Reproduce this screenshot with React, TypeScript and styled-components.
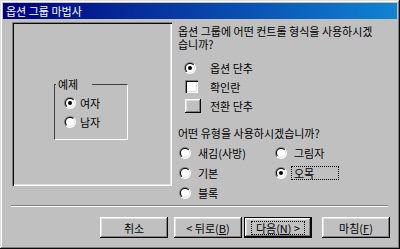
import React, { useId } from 'react';
import styled, { createGlobalStyle, css } from 'styled-components';

const Global = createGlobalStyle`
  html, body { margin: 0; padding: 0; background: #c0c0c0; }
  body {
    font-family: "Noto Sans CJK KR", "Noto Sans", sans-serif;
    font-size: 11px;
    color: #000;
  }
  * { box-sizing: border-box; }
`;

const Window = styled.div`
  width: 400px;
  height: 249px;
  background: #c0c0c0;
  padding: 3px;
  display: flex;
  flex-direction: column;
  box-shadow: inset -1px -1px #0a0a0a, inset 1px 1px #dfdfdf,
    inset -2px -2px #808080, inset 2px 2px #ffffff;
`;

const TitleBar = styled.div`
  height: 16px;
  padding-left: 3px;
  display: flex;
  align-items: center;
  background: linear-gradient(90deg, #000080 0%, #1084d0 100%);
  color: #fff;
  font-size: 11px;
  line-height: 16px;
  white-space: nowrap;
`;

const Body = styled.div`
  flex: 1;
  display: flex;
  flex-direction: column;
  padding: 3px 0 0 9px;
`;

const Main = styled.div`
  display: flex;
  gap: 6px;
`;

const Preview = styled.div`
  width: 160px;
  height: 164px;
  flex: none;
  padding: 56px 0 0 42px;
  box-shadow: inset 1px 1px #808080, inset 2px 2px #0a0a0a,
    inset -1px -1px #ffffff, inset -2px -2px #dfdfdf;
`;

const GroupBox = styled.fieldset`
  width: 74px;
  height: 62px;
  margin: 0;
  padding: 0;
  min-width: 0;
  border: 1px solid;
  border-color: #404040 #ffffff #ffffff #404040;
`;

const Legend = styled.legend`
  margin-left: 1px;
  padding: 0 14px 0 2px;
  font-size: 11px;
  line-height: 12px;
`;

const GroupList = styled.div`
  display: flex;
  flex-direction: column;
  padding: 3px 0 0 9px;
`;

const GroupRow = styled.div`
  height: 19px;
  display: flex;
  align-items: center;
  gap: 4px;
  line-height: 12px;
`;

const Side = styled.div`
  flex: 1;
  display: flex;
  flex-direction: column;
  padding-top: 3px;
  white-space: nowrap;
`;

const Prompt = styled.p<{ $gap?: number }>`
  margin: ${(p) => p.$gap ?? 0}px 0 0 0;
  line-height: 13px;
`;

const OptionList = styled.div`
  display: flex;
  flex-direction: column;
  margin-top: 7px;
  padding-left: 6px;
`;

const OptionRow = styled.div`
  height: 19px;
  display: flex;
  align-items: center;
  line-height: 12px;
`;

const IconCell = styled.span<{ $inset?: number }>`
  width: 26px;
  flex: none;
  display: flex;
  align-items: center;
  padding-left: ${(p) => p.$inset ?? 0}px;
`;

const CheckBox = styled.span`
  display: block;
  width: 13px;
  height: 13px;
  background: #fff;
  box-shadow: inset 1px 1px #808080, inset 2px 2px #0a0a0a,
    inset -1px -1px #ffffff, inset -2px -2px #dfdfdf;
`;

const ToggleFace = styled.span`
  display: block;
  width: 16px;
  height: 14px;
  background: #c0c0c0;
  box-shadow: inset -1px -1px #0a0a0a, inset 1px 1px #ffffff,
    inset -2px -2px #808080, inset 2px 2px #dfdfdf;
`;

const StyleGrid = styled.div`
  display: grid;
  grid-template-columns: 96px auto;
  grid-auto-rows: 20px;
  margin-top: 3px;
  padding-left: 1px;
`;

const StyleOption = styled.div`
  display: flex;
  align-items: center;
  gap: 4px;
`;

const OptionLabel = styled.span<{ $focused?: boolean }>`
  display: inline-block;
  height: 14px;
  line-height: 12px;
  padding: 0 2px;
  border: 1px dotted transparent;
  ${(p) =>
    p.$focused &&
    css`
      border-color: #000;
      min-width: 48px;
    `}
`;

const Separator = styled.div`
  width: 377px;
  height: 2px;
  margin: 2px 0 0 -1px;
  border-top: 1px solid #808080;
  border-bottom: 1px solid #ffffff;
`;

const ButtonRow = styled.div`
  display: flex;
  justify-content: flex-end;
  margin-top: 10px;
  padding-right: 7px;
`;

const Button = styled.button<{ $default?: boolean; $gap?: number }>`
  width: 68px;
  height: 21px;
  margin-left: ${(p) => p.$gap ?? 0}px;
  padding: 0;
  border: none;
  background: #c0c0c0;
  font: inherit;
  font-size: 11px;
  line-height: 12px;
  color: #000;
  display: flex;
  align-items: center;
  justify-content: center;
  position: relative;
  box-shadow: inset -1px -1px #0a0a0a, inset 1px 1px #ffffff,
    inset -2px -2px #808080, inset 2px 2px #dfdfdf;
  ${(p) =>
    p.$default &&
    css`
      box-shadow: inset 0 0 0 1px #0a0a0a, inset -2px -2px #0a0a0a,
        inset 2px 2px #ffffff, inset -3px -3px #808080, inset 3px 3px #dfdfdf;
    `}
`;

const FocusRing = styled.span`
  padding: 0 4px;
  height: 14px;
  line-height: 12px;
  border: 1px dotted #000;
`;

function Radio({ checked }: { checked?: boolean }) {
  const id = useId().replace(/:/g, '');
  return (
    <svg width="12" height="12" viewBox="0 0 12 12" style={{ display: 'block', flex: 'none' }}>
      <defs>
        <linearGradient id={`o${id}`} x1="0" y1="0" x2="1" y2="1">
          <stop offset="0.5" stopColor="#808080" />
          <stop offset="0.5" stopColor="#ffffff" />
        </linearGradient>
        <linearGradient id={`i${id}`} x1="0" y1="0" x2="1" y2="1">
          <stop offset="0.5" stopColor="#0a0a0a" />
          <stop offset="0.5" stopColor="#dfdfdf" />
        </linearGradient>
      </defs>
      <circle cx="6" cy="6" r="6" fill={`url(#o${id})`} />
      <circle cx="6" cy="6" r="5" fill={`url(#i${id})`} />
      <circle cx="6" cy="6" r="4" fill="#ffffff" />
      {checked && <circle cx="6" cy="6" r="2" fill="#000" />}
    </svg>
  );
}

export default function App() {
  return (
    <>
      <Global />
      <Window>
        <TitleBar>옵션 그룹 마법사</TitleBar>
        <Body>
          <Main>
            <Preview>
              <GroupBox>
                <Legend>예제</Legend>
                <GroupList>
                  <GroupRow>
                    <Radio checked />
                    여자
                  </GroupRow>
                  <GroupRow>
                    <Radio />
                    남자
                  </GroupRow>
                </GroupList>
              </GroupBox>
            </Preview>
            <Side>
              <Prompt>
                옵션 그룹에 어떤 컨트롤 형식을 사용하시겠
                <br />
                습니까?
              </Prompt>
              <OptionList>
                <OptionRow>
                  <IconCell>
                    <Radio checked />
                  </IconCell>
                  옵션 단추
                </OptionRow>
                <OptionRow>
                  <IconCell $inset={1}>
                    <CheckBox />
                  </IconCell>
                  확인란
                </OptionRow>
                <OptionRow>
                  <IconCell $inset={1}>
                    <ToggleFace />
                  </IconCell>
                  전환 단추
                </OptionRow>
              </OptionList>
              <Prompt $gap={12}>어떤 유형을 사용하시겠습니까?</Prompt>
              <StyleGrid>
                <StyleOption>
                  <Radio />
                  <OptionLabel>새김(사방)</OptionLabel>
                </StyleOption>
                <StyleOption>
                  <Radio />
                  <OptionLabel>그림자</OptionLabel>
                </StyleOption>
                <StyleOption>
                  <Radio />
                  <OptionLabel>기본</OptionLabel>
                </StyleOption>
                <StyleOption>
                  <Radio checked />
                  <OptionLabel $focused>오목</OptionLabel>
                </StyleOption>
                <StyleOption>
                  <Radio />
                  <OptionLabel>블록</OptionLabel>
                </StyleOption>
              </StyleGrid>
            </Side>
          </Main>
          <Separator />
          <ButtonRow>
            <Button>취소</Button>
            <Button $gap={6}>
              &lt; 뒤로(<u>B</u>)
            </Button>
            <Button $gap={2} $default>
              <FocusRing>
                다음(<u>N</u>) &gt;
              </FocusRing>
            </Button>
            <Button $gap={10}>
              마침(<u>F</u>)
            </Button>
          </ButtonRow>
        </Body>
      </Window>
    </>
  );
}
